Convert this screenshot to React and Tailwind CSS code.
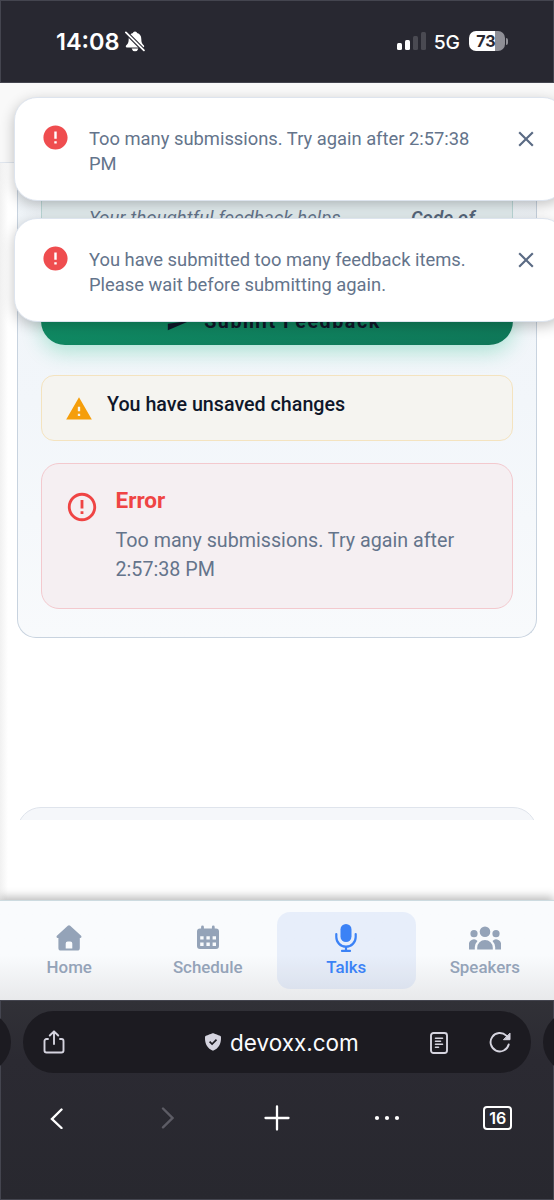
import { MdClose, MdError, MdErrorOutline, MdSend, MdWarning } from 'react-icons/md';

const HomeIcon = () => (
  <svg className="w-[26px] h-[26px]" viewBox="0 0 26 26" fill="currentColor">
    <path
      fillRule="evenodd"
      d="M11.8 0.8a1.9 1.9 0 0 1 2.4 0L25.1 10.8c.7.8.3 2-.7 2.1H23.8V23a2.6 2.6 0 0 1-2.6 2.6H5A2.6 2.6 0 0 1 2.4 23V12.9H1.5c-1-.1-1.3-1.3-.6-2.1ZM11.7 16.5a2 2 0 0 0-2 2v5.1h6.6V18.5a2 2 0 0 0-2-2Z"
    />
  </svg>
);

const CalendarIcon = () => (
  <svg className="w-[24px] h-[26px]" viewBox="0 0 24 26" fill="currentColor">
    <path
      fillRule="evenodd"
      d="M6.5 0.5a1.4 1.4 0 0 1 1.4 1.4V3.5h8V1.9a1.4 1.4 0 0 1 2.8 0V3.5H20a3 3 0 0 1 3 3V21a3 3 0 0 1-3 3H4a3 3 0 0 1-3-3V6.5a3 3 0 0 1 3-3h1.1V1.9A1.4 1.4 0 0 1 6.5 0.5ZM4.2 11.2v3.4h3.4v-3.4ZM10.4 11.2v3.4h3.4v-3.4ZM16.6 11.2v3.4H20v-3.4ZM4.2 17.5v3.4h3.4v-3.4ZM10.4 17.5v3.4h3.4v-3.4ZM16.6 17.5v3.4H20v-3.4Z"
    />
  </svg>
);

const MicIcon = () => (
  <svg className="w-[22px] h-[28px]" viewBox="0 0 22 28" fill="none">
    <rect x="5.5" y="0" width="11" height="18" rx="5.5" fill="currentColor" />
    <path
      d="M1.3 10v3a9.7 9.7 0 0 0 19.4 0v-3M11 22.5V27M7 26.9h8"
      stroke="currentColor"
      strokeWidth="2.2"
      strokeLinecap="round"
    />
  </svg>
);

const SpeakersIcon = () => (
  <svg className="w-[32px] h-[24px]" viewBox="0 0 32 24" fill="currentColor">
    <circle cx="16" cy="5.7" r="5.3" />
    <circle cx="5" cy="7.7" r="3.6" />
    <circle cx="27" cy="7.7" r="3.6" />
    <path d="M8.2 23.500V21.800a7.800 7.800 0 0 1 15.600 0v1.700ZM0 23.500V19.500a5 5 0 0 1 8.500-4.500A10 10 0 0 0 5.800 21v2.500ZM32 23.500V19.500a5 5 0 0 0-8.500-4.500A10 10 0 0 1 26.200 21v2.500Z" />
  </svg>
);

const BellOffIcon = () => (
  <svg className="w-[20px] h-[21px]" viewBox="0 0 20 21">
    <path
      fill="#fff"
      d="M10 .5c1.200 0 2 .8 2 1.600 3 .8 4.300 3 4.300 5.900 0 3.500.8 4.800 2.600 6.500.5.600.3 1.900-.7 1.900H1.800c-1 0-1.300-1.200-.7-1.900C2.900 12.800 3.700 11.500 3.700 8c0-2.900 1.300-5.100 4.300-5.900 0-.8.8-1.600 2-1.600ZM6.600 17.600h6.800a3.500 3.500 0 0 1-6.800 0Z"
    />
    <path d="M.8 1.3l18.200 18.200" stroke="#282831" strokeWidth="4" />
    <path d="M.9 1.4l18 18" stroke="#fff" strokeWidth="1.8" strokeLinecap="round" />
  </svg>
);

const StatusBar = () => (
  <div className="h-[83px] shrink-0 flex items-center justify-between pl-[55px] pr-[45px] bg-[#282831] border border-[#44454f] text-white font-['Inter',sans-serif]">
    <div className="flex items-center gap-[5px]">
      <span className="text-[23.5px] leading-none font-semibold">14:08</span>
      <BellOffIcon />
    </div>
    <div className="flex items-center">
      <div className="flex items-end gap-[3px] mr-[8px]">
        <div className="w-[5px] h-[7px] rounded-[1.5px] bg-white" />
        <div className="w-[5px] h-[10px] rounded-[1.5px] bg-white" />
        <div className="w-[5px] h-[14px] rounded-[1.5px] bg-[#4a4a52]" />
        <div className="w-[5px] h-[18px] rounded-[1.5px] bg-[#4a4a52]" />
      </div>
      <span className="text-[19.3px] leading-none font-medium mr-[9px] mt-[2px]">5G</span>
      <div className="w-[36px] h-[20px] rounded-[7px] flex items-center justify-center bg-linear-to-r from-white from-73% to-[#8f8f96] to-73%">
        <span className="text-[16px] leading-none font-bold text-[#282831] mr-[2px]">73</span>
      </div>
      <div className="w-[2px] h-[7px] rounded-r-full bg-[#8f8f96] ml-px" />
    </div>
  </div>
);

const Toast = ({ children }) => (
  <div className="w-[552px] h-[104px] flex items-start rounded-[23px] border border-[#dde4ee] bg-white shadow-[0_4px_14px_rgba(0,0,0,0.24)] pl-[26px] pt-[25px]">
    <MdError className="w-[29px] h-[29px] shrink-0 text-[#ef4d4f]" />
    <p className="w-[396px] ml-[19px] mt-[3px] text-[18.35px] leading-[25.3px] text-[#64748b]">
      {children}
    </p>
    <MdClose className="w-[26px] h-[26px] ml-[28px] mt-[3px] shrink-0 text-[#5b6b84]" />
  </div>
);

const FeedbackCard = () => (
  <div className="ml-[17px] w-[520px] h-[475px] px-[23px] flex flex-col rounded-b-[19px] border border-t-0 border-[#c8d3df] bg-linear-to-b from-[#eff4f8] via-[#f2f6fa] to-[#f8fafc]">
    {/* Guidelines */}
    <div className="h-[100px] shrink-0 flex justify-between pt-[42px] pl-[47px] pr-[37px] border border-[#bcd9d8] bg-[#e4eef0] text-[18.3px] leading-[24px] italic text-[#64748b]">
      <span className="tracking-[0.2px]">Your thoughtful feedback helps</span>
      <span className="font-semibold tracking-[0.3px] text-[#56667b]">Code of</span>
    </div>

    {/* Submit */}
    <button className="h-[48px] mt-[34px] shrink-0 flex items-center justify-center gap-[16px] pr-[7px] pt-px rounded-[24px] bg-linear-to-br from-[#10976a] to-[#0f7658] shadow-[0_7px_20px_rgba(16,185,129,0.3)] text-[19.7px] font-bold tracking-[1.55px] text-[#0f172a]">
      <MdSend className="w-[22px] h-[22px]" />
      Submit Feedback
    </button>

    <div className="h-[66px] mt-[30px] shrink-0 flex items-start pl-[23px] pt-[16px] rounded-[13px] border border-[#f4e3bf] bg-[#f5f4f0]">
      <MdWarning className="w-[28px] h-[28px] mt-[3px] text-[#f59e0b]" />
      <span className="ml-[14px] text-[19.7px] leading-[26px] font-medium text-[#0f172a]">
        You have unsaved changes
      </span>
    </div>

    <div className="h-[146px] mt-[22px] shrink-0 flex items-start pl-[23px] pt-[22px] rounded-[18px] border border-[#f3c9ce] bg-[#f5eff2]">
      <MdErrorOutline className="w-[34px] h-[34px] mt-[4px] shrink-0 text-[#ef4444]" />
      <div className="ml-[16.5px]">
        <h3 className="text-[22.5px] leading-[29px] font-bold text-[#ef4444]">Error</h3>
        <p className="w-[360px] mt-[11px] text-[19.7px] leading-[29.3px] text-[#64748b]">
          Too many submissions. Try again after 2:57:38 PM
        </p>
      </div>
    </div>
  </div>
);

const tabs = [
  { label: 'Home', Icon: HomeIcon },
  { label: 'Schedule', Icon: CalendarIcon },
  { label: 'Talks', Icon: MicIcon, active: true },
  { label: 'Speakers', Icon: SpeakersIcon },
];

const TabBar = () => (
  <nav className="relative h-[100px] shrink-0 flex pt-[11px] pb-[11px] border-t border-[#cddbe0] bg-linear-to-b from-[#f9fbfd] from-55% to-[#e8e9eb] shadow-[0_-3px_9px_rgba(0,0,0,0.28)]">
    {tabs.map(({ label, Icon, active }) => (
      <div
        key={label}
        className={`flex-1 flex flex-col items-center rounded-[13px] pt-[11px] ${
          active ? 'bg-[#3b73e2]/9 text-[#3b82f6]' : 'text-[#94a3b8]'
        }`}
      >
        <div className="h-[30px] flex items-center">
          <Icon />
        </div>
        <span className="mt-[3px] text-[16.9px] leading-[22px] font-medium">{label}</span>
      </div>
    ))}
  </nav>
);

const BrowserBar = () => (
  <div className="relative h-[200px] shrink-0 border border-[#44454f] bg-linear-to-b from-[#313137] via-[#2b2a32] via-30% to-[#28282f] text-white font-['Inter',sans-serif]">
    {/* Address bar with the neighbouring tabs peeking in */}
    <div className="flex justify-between items-center pt-[10px] -mx-px">
      <div className="w-[11px] flex justify-end overflow-hidden">
        <div className="w-[62px] h-[62px] shrink-0 rounded-full bg-[#1c1b21]" />
      </div>
      <div className="w-[508px] h-[62px] flex items-center rounded-full bg-[#1c1b21] text-[#d5d4df]">
        <svg className="w-[22px] h-[24px] ml-[20px]" viewBox="0 0 22 24" fill="none" stroke="currentColor" strokeWidth="1.9" strokeLinecap="round" strokeLinejoin="round">
          <path d="M5 9H3.5A2 2 0 0 0 1.5 11v9.5a2 2 0 0 0 2 2h15a2 2 0 0 0 2-2V11a2 2 0 0 0-2-2H17M11 14V1.5M6.8 5.500 11 1.300l4.200 4.200" />
        </svg>
        <svg className="w-[18px] h-[18px] ml-[139px]" viewBox="0 0 18 18">
          <path d="M9 .3c.5 0 5.7 2 7 2.500.7.3 1 .7 1 1.400C17.200 11 14.500 15.500 9 17.700 3.500 15.500.8 11 1 4.200c0-.7.3-1.100 1-1.400C3.300 2.300 8.500.3 9 .3Z" fill="currentColor" />
          <path d="m5.6 8.600 2.500 2.500 4.400-4.400" fill="none" stroke="#1c1b21" strokeWidth="1.7" />
        </svg>
        <span className="ml-[8px] mt-[2px] text-[22.5px] leading-none text-[#fbfbfe]">devoxx.com</span>
        <svg className="w-[18px] h-[22px] mt-px ml-auto" viewBox="0 0 18 22" fill="none" stroke="currentColor" strokeWidth="1.9" strokeLinecap="round">
          <rect x="1" y="1" width="16" height="20" rx="2.5" />
          <path d="M5.5 6.300h7M5.500 9.300h5M5.500 12.300h7M5.500 15.300h3" strokeWidth="1.6" />
        </svg>
        <svg className="w-[22px] h-[22px] ml-[41px] mr-[20px]" viewBox="0 0 22 22" fill="none" stroke="currentColor" strokeWidth="1.9" strokeLinecap="round">
          <path d="M19.7 13.500a9.200 9.200 0 1 1-2.400-8.800L19.500 7" />
          <path d="M21 2.5v6.200h-6.200Z" fill="currentColor" strokeWidth="1" strokeLinejoin="round" />
        </svg>
      </div>
      <div className="w-[11px] flex overflow-hidden">
        <div className="w-[62px] h-[62px] shrink-0 rounded-full bg-[#1c1b21]" />
      </div>
    </div>

    <div className="grid grid-cols-5 items-center justify-items-center mt-[32px]">
      <svg className="w-[14px] h-[22px]" viewBox="0 0 14 22" fill="none" stroke="#fff" strokeWidth="2.4" strokeLinecap="round">
        <path d="M12.500 2.500 3 12 12.500 21" />
      </svg>
      <svg className="w-[14px] h-[22px]" viewBox="0 0 14 22" fill="none" stroke="#5d5c65" strokeWidth="2.4" strokeLinecap="round">
        <path d="M3 1.500 12.500 11 3 20.300" />
      </svg>
      <svg className="w-[26px] h-[26px]" viewBox="0 0 26 26" fill="none" stroke="#fff" strokeWidth="2.3" strokeLinecap="round">
        <path d="M13 1.5v23M1.500 13h23" />
      </svg>
      <svg className="w-[26px] h-[6px]" viewBox="0 0 26 6" fill="#fff">
        <circle cx="3" cy="3" r="2.1" />
        <circle cx="13" cy="3" r="2.1" />
        <circle cx="23" cy="3" r="2.1" />
      </svg>
      <div className="w-[29px] h-[24px] flex items-center justify-center rounded-[4px] border-2 border-white text-[16px] leading-none font-semibold">
        16
      </div>
    </div>
  </div>
);

export default function App() {
  return (
    <div className="w-[554px] h-[1200px] flex flex-col overflow-hidden bg-white font-['Roboto',sans-serif]">
      <StatusBar />

      <main className="relative h-[817px] shrink-0 overflow-hidden bg-linear-to-r from-[#f1f1f1] to-white to-[8px]">
        <div className="h-[80px] border-b border-[#e1e7ef] bg-[#f9f9f9]" />
        <FeedbackCard />
        {/* Top edge of the following card */}
        <div className="h-[13px] mt-[169px] mx-[17px] overflow-hidden">
          <div className="h-[60px] rounded-[24px] border border-[#dfe4ec] bg-[#f5f7fa]" />
        </div>

        <div className="absolute left-[14px] top-[14px] flex flex-col gap-[17px]">
          <Toast>Too many submissions. Try again after 2:57:38 PM</Toast>
          <Toast>You have submitted too many feedback items. Please wait before submitting again.</Toast>
        </div>
      </main>

      <TabBar />
      <BrowserBar />
    </div>
  );
}
